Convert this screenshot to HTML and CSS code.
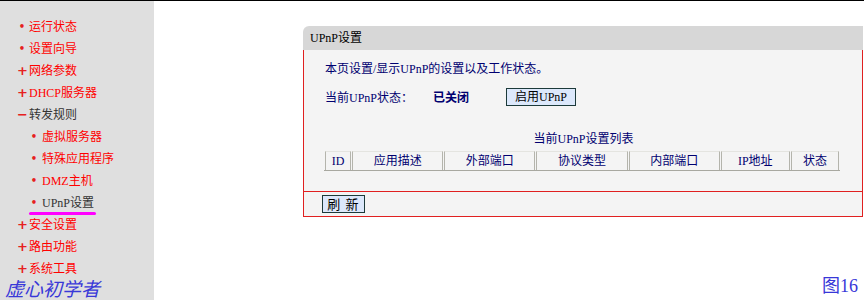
FILE: index.html
```html
<!DOCTYPE html>
<html lang="zh-CN">
<head>
  <meta charset="UTF-8" />
  <title>UPnP设置</title>
  <link rel="stylesheet" href="styles.css">
</head>
<body>
  <div class="topline"></div>
  <div class="page">
    <div class="menu">
      <ul>
        <li class="dot">运行状态</li>
        <li class="dot">设置向导</li>
        <li class="plus">网络参数</li>
        <li class="plus">DHCP服务器</li>
        <li class="minus open">转发规则</li>
        <li class="sub">虚拟服务器</li>
        <li class="sub">特殊应用程序</li>
        <li class="sub">DMZ主机</li>
        <li class="sub current">UPnP设置</li>
        <li class="plus">安全设置</li>
        <li class="plus">路由功能</li>
        <li class="plus">系统工具</li>
      </ul>
      <div class="mark">虚心初学者</div>
    </div>

    <div class="main">
      <div class="panel">
        <div class="panel-title">UPnP设置</div>
        <div class="panel-body">
          <p class="desc">本页设置/显示UPnP的设置以及工作状态。</p>
          <div class="status-row">
            <span class="label">当前UPnP状态：</span>
            <span class="state">已关闭</span>
            <button class="btn btn-enable">启用UPnP</button>
          </div>
          <div class="list-title">当前UPnP设置列表</div>
          <table class="list">
            <tr>
              <td class="c-id">ID</td>
              <td class="c-wide">应用描述</td>
              <td class="c-wide">外部端口</td>
              <td class="c-wide">协议类型</td>
              <td class="c-wide">内部端口</td>
              <td class="c-ip">IP地址</td>
              <td class="c-st">状态</td>
            </tr>
          </table>
        </div>
        <div class="panel-foot">
          <button class="btn btn-refresh">刷 新</button>
        </div>
      </div>
      <div class="fig">图16</div>
    </div>
  </div>
</body>
</html>
```

FILE: styles.css
```css
html, body {
  margin: 0;
  padding: 0;
  background: #fff;
  height: 300px;
  overflow: hidden;
}
body {
  font-family: "Liberation Serif", "Noto Sans CJK SC", serif;
  font-size: 12px;
  color: #000;
}
.topline {
  height: 1px;
  background: #000;
}
.page {
  display: flex;
  height: 299px;
}

/* left menu */
.menu {
  width: 154px;
  background: #dfdfdf;
  flex: none;
}
.menu ul {
  list-style: none;
  margin: 0;
  padding: 15px 0 0 0;
}
.menu li {
  height: 22px;
  line-height: 22px;
  color: #f00;
  padding-left: 29px;
  position: relative;
}
.menu li::before {
  position: absolute;
  left: 17px;
  top: 0;
  width: 8px;
  text-align: center;
  color: #e62020;
  font-weight: bold;
  font-family: "DejaVu Sans", sans-serif;
}
.menu li.dot::before { content: "•"; left: 18px; font-size: 10px; }
.menu li.plus::before { content: "+"; font-size: 13px; }
.menu li.minus::before { content: "−"; font-size: 13px; }
.menu li.open { color: #333; }
.menu li.sub { padding-left: 42px; }
.menu li.sub::before { content: "•"; left: 30px; font-size: 10px; }
.menu li.current { color: #333; }
.menu li.current::after {
  content: "";
  position: absolute;
  left: 29px;
  top: 20px;
  width: 67px;
  height: 3px;
  border-radius: 2px;
  background: #f0f;
}
.mark {
  font-family: "Liberation Serif", "Noto Sans CJK SC", serif;
  font-style: italic;
  font-size: 19px;
  line-height: 20px;
  color: #3838d8;
  padding-left: 5px;
  letter-spacing: 0;
}

/* main area */
.main {
  flex: 1;
  padding-top: 25px;
}
.panel {
  margin-left: 149px;
  margin-right: 1px;
}
.panel-title {
  height: 24px;
  line-height: 24px;
  background: #d7d7d7;
  border-top-left-radius: 6px;
  padding-left: 7px;
}
.panel-body {
  background: #f4f4f4;
  border-left: 1px solid #e02020;
  border-right: 1px solid #e02020;
  height: 141px;
  padding-left: 21px;
  box-sizing: border-box;
  padding-top: 11px;
}
.desc {
  margin: 0;
  line-height: 16px;
  color: #000070;
}
.status-row {
  display: flex;
  align-items: center;
  margin-top: 11px;
  height: 18px;
  color: #000070;
}
.label { width: 108px; }
.state {
  width: 73px;
  font-weight: bold;
}
.btn {
  font-family: "Liberation Serif", "Noto Sans CJK SC", serif;
  font-size: 12px;
  background: #dce8fb;
  border: 1px solid #1c3a3a;
  color: #000;
  padding: 0;
  margin: 0;
  line-height: 15px;
}
.btn-enable {
  width: 70px;
  height: 18px;
}
.list-title {
  margin-top: 25px;
  text-align: center;
  line-height: 16px;
  color: #000070;
  padding-right: 20px;
}
.list {
  margin-top: 4px;
  border-collapse: separate;
  border-spacing: 1px 0;
  border-bottom: 1px solid #a8a8a0;
  table-layout: fixed;
  width: 516px;
  position: relative;
  left: -1px;
}
.list td {
  height: 18px;
  padding: 0;
  text-align: center;
  color: #000070;
  border: 1px solid #b4b4ac;
  border-top-color: #e4e4e0;
  border-bottom: none;
  line-height: 18px;
}
.c-id { width: 24px; }
.c-wide { width: 89px; }
.c-ip { width: 67px; }
.c-st { width: 46px; }

.panel-foot {
  background: #f4f4f4;
  border: 1px solid #e02020;
  height: 24px;
  display: flex;
  align-items: center;
  padding-left: 18px;
}
.btn-refresh {
  width: 43px;
  height: 18px;
  font-size: 13px;
  letter-spacing: 1px;
}
.fig {
  margin-top: 59px;
  text-align: right;
  padding-right: 6px;
  font-family: "Liberation Serif", "Noto Sans CJK SC", serif;
  font-size: 18px;
  line-height: 20px;
  color: #3838d8;
}
```
